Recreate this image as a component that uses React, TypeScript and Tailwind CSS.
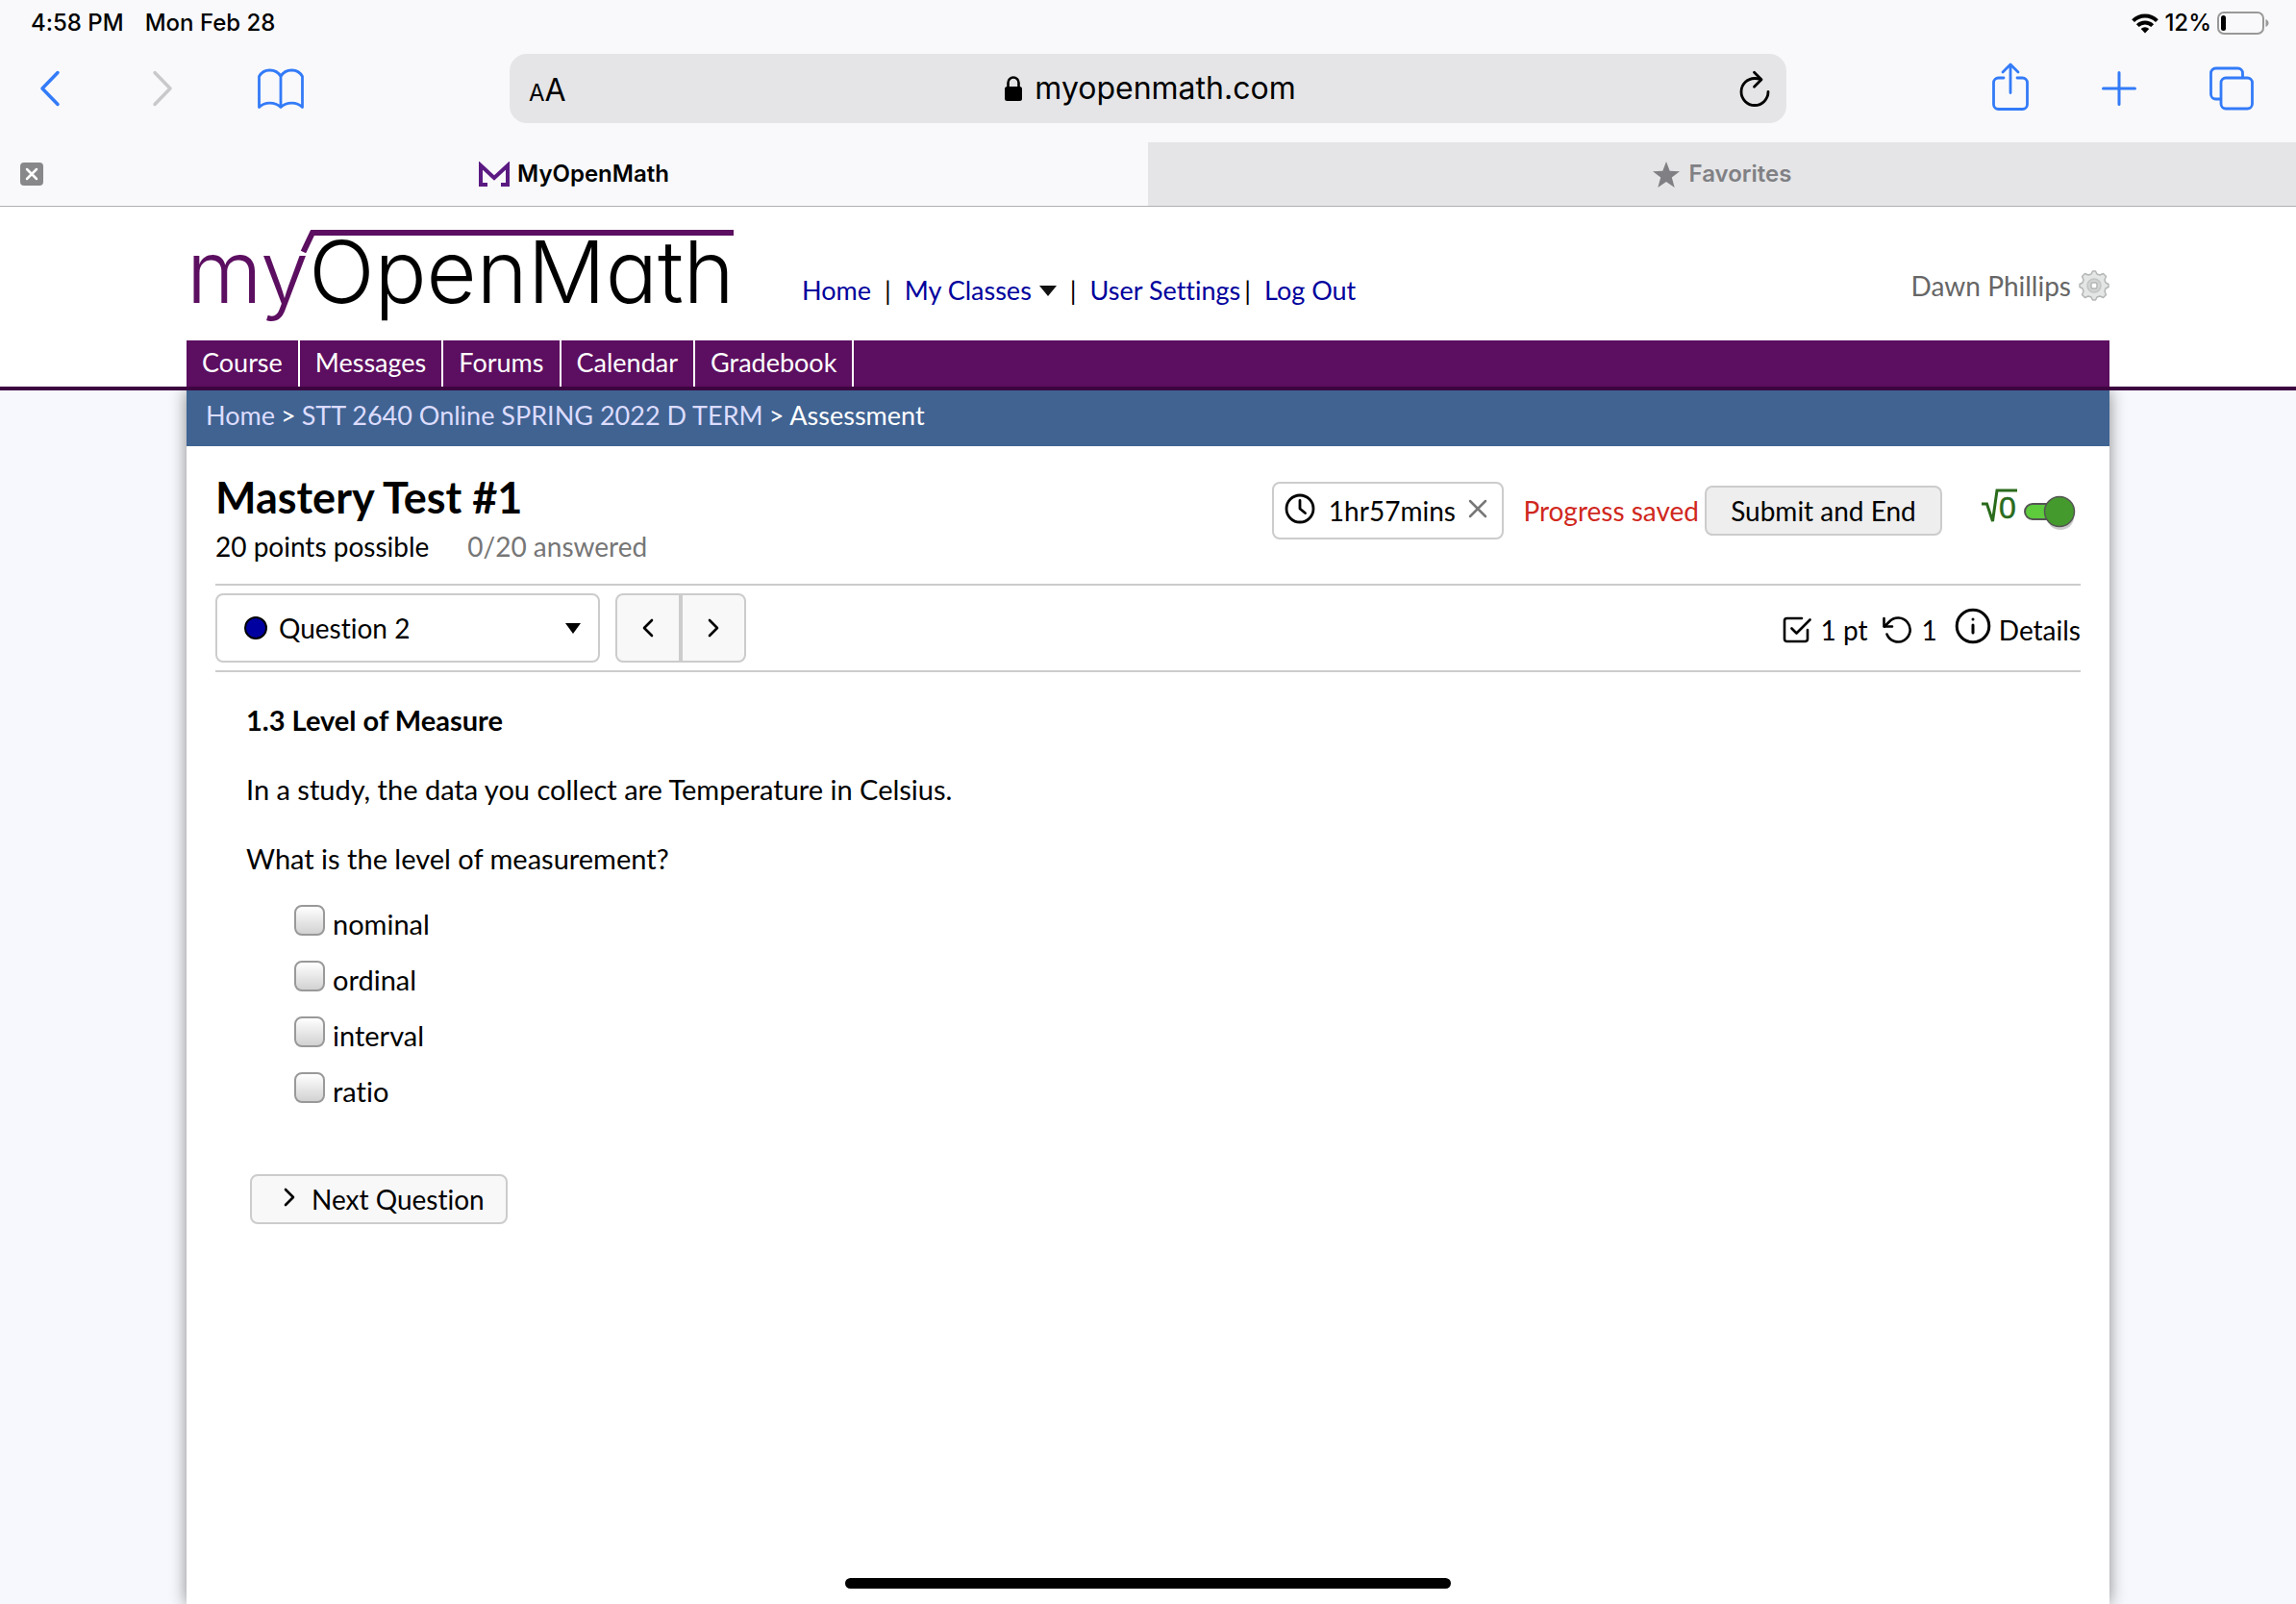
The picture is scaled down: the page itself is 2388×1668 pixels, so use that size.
import { useState } from "react";

const menuItems = ["Course", "Messages", "Forums", "Calendar", "Gradebook"];
const choices = ["nominal", "ordinal", "interval", "ratio"];

const StatusBar = () => (
  <div className="flex h-12 items-center justify-between pl-8 pr-7 text-2xl font-medium">
    <div className="flex gap-[22px]">
      <span>4:58 PM</span>
      <span>Mon Feb 28</span>
    </div>
    <div className="flex items-center gap-1.5">
      <svg width="28" height="21" viewBox="0 0 28 21" fill="none" stroke="#000" strokeWidth="4">
        <path d="M1.6 7.6a17.6 17.6 0 0 1 24.8 0" />
        <path d="M6.3 12.6a11 11 0 0 1 15.4 0" />
        <path d="M14 20.6l-4.3-4.5a6.2 6.2 0 0 1 8.6 0z" fill="#000" stroke="none" />
      </svg>
      <span>12%</span>
      <svg width="54" height="24" viewBox="0 0 54 24" fill="none">
        <rect x="1" y="1" width="47" height="22" rx="6" stroke="#999" strokeWidth="2" />
        <rect x="4" y="4" width="5" height="16" rx="2.5" fill="#000" />
        <path d="M50.500 8v8c2-.8 3-2.300 3-4s-1-3.200-3-4z" fill="#999" />
      </svg>
    </div>
  </div>
);

const Toolbar = () => (
  <div className="flex h-[100px] items-start pt-2">
    <div className="flex h-[72px] w-[530px] shrink-0 items-center pl-10 text-[#337bf8]">
      <button aria-label="Back">
        <svg width="24" height="40" viewBox="0 0 24 40" fill="none" stroke="currentColor" strokeWidth="3.500" strokeLinecap="round" strokeLinejoin="round">
          <path d="M20 3.500L4 20l16 16.500" />
        </svg>
      </button>
      <button aria-label="Forward" className="ml-[93px] text-[#c9c9cb]">
        <svg width="24" height="40" viewBox="0 0 24 40" fill="none" stroke="currentColor" strokeWidth="3.500" strokeLinecap="round" strokeLinejoin="round">
          <path d="M4 3.500L20 20 4 36.500" />
        </svg>
      </button>
      <button aria-label="Bookmarks" className="ml-[87px]">
        <svg width="48" height="42" viewBox="0 0 48 42" fill="none" stroke="currentColor" strokeWidth="2.800" strokeLinejoin="round">
          <path d="M24 8.500C21.500 4 17.500 2 12.500 2S4 4 1.500 8.500v32C4.500 37.500 8 36.200 12.500 36.200S21 37.500 24 40.500c3-3 7-4.300 11.500-4.300s8 1.300 11 4.300v-32C44 4 40.500 2 35.500 2S26.500 4 24 8.500v32" />
        </svg>
      </button>
    </div>

    <div className="flex h-[72px] min-w-0 flex-1 items-center justify-between rounded-[18px] bg-[#e5e5e7] pl-5 pr-4">
      <button aria-label="Text size" className="w-12 pt-1 text-left text-[32px] leading-10">
        <span className="text-2xl">A</span>A
      </button>
      <a href="#" className="flex items-center gap-3 text-[32px] leading-10">
        <svg width="20" height="28" viewBox="0 0 20 28">
          <path d="M4.500 13V8a5.500 5.500 0 0 1 11 0v5" fill="none" stroke="#000" strokeWidth="2.600" />
          <rect x="1" y="12" width="18" height="15" rx="2.500" />
        </svg>
        myopenmath.com
      </a>
      <button aria-label="Reload" className="flex w-12 justify-end">
        <svg width="34" height="38" viewBox="0 0 34 38" fill="none" stroke="#000" strokeWidth="2.800" strokeLinecap="round" strokeLinejoin="round">
          <path d="M31 22.500A14 14 0 1 1 17 8.500c2.500 0 4.500.4 6.500 1.200" />
          <path d="M16.500 2.200l7.500 7.500-7.500 7.500" />
        </svg>
      </button>
    </div>

    <div className="flex h-[72px] w-[530px] shrink-0 items-center justify-end pr-11 text-[#337bf8]">
      <button aria-label="Share" className="pb-1">
        <svg width="38" height="50" viewBox="0 0 38 50" fill="none" stroke="currentColor" strokeWidth="2.800" strokeLinecap="round" strokeLinejoin="round">
          <path d="M12 16H6.500a5 5 0 0 0-5 5v22.500a5 5 0 0 0 5 5h25a5 5 0 0 0 5-5V21a5 5 0 0 0-5-5H26" />
          <path d="M19 31.500V2.500M11 10l8-8 8 8" />
        </svg>
      </button>
      <button aria-label="New tab" className="ml-[76px]">
        <svg width="36" height="36" viewBox="0 0 36 36" fill="none" stroke="currentColor" strokeWidth="3" strokeLinecap="round">
          <path d="M18 1.500v33M1.500 18h33" />
        </svg>
      </button>
      <button aria-label="All tabs" className="ml-[76px]">
        <svg width="46" height="46" viewBox="0 0 46 46" fill="none" stroke="currentColor" strokeWidth="2.800">
          <path d="M12 34H6.500a5 5 0 0 1-5-5V7a5 5 0 0 1 5-5h23a5 5 0 0 1 5 5v5" />
          <rect x="12" y="12" width="32.500" height="32" rx="5" />
        </svg>
      </button>
    </div>
  </div>
);

const TabStrip = () => (
  <div className="flex h-[67px] border-b border-[#b0b0b2] text-2xl font-semibold">
    <div className="flex w-1/2 items-center pl-[21px] pr-[45px]">
      <button aria-label="Close tab">
        <svg width="24" height="24" viewBox="0 0 24 24">
          <rect width="24" height="24" rx="4" fill="#88888b" />
          <path d="M7 7l10 10M17 7L7 17" stroke="#fff" strokeWidth="2.500" strokeLinecap="round" />
        </svg>
      </button>
      <div className="flex flex-1 items-center justify-center gap-2">
        <svg width="32" height="26" viewBox="0 0 32 26" fill="none" stroke="#5b1a82" strokeWidth="4">
          <path d="M9 24H2V4l14 13L30 4v20h-7" />
        </svg>
        MyOpenMath
      </div>
    </div>
    <div className="flex w-1/2 items-center justify-center gap-2.5 bg-[#e5e5e7] text-[#808084]">
      <svg width="28" height="27" viewBox="0 0 28 27" fill="currentColor">
        <path d="M14 0l3.700 9.800L28 10.200l-8.200 6.400L22.700 27 14 21l-8.700 6 2.900-10.400L0 10.200l10.300-.4z" />
      </svg>
      Favorites
    </div>
  </div>
);

const Logo = () => (
  <a href="#" aria-label="myOpenMath" className="flex w-[570px] flex-col pt-6">
    <svg width="570" height="24" viewBox="0 0 570 24" fill="none" className="-mb-6">
      <path d="M121.500 23L131 3h438" stroke="#5c0e60" strokeWidth="6" />
    </svg>
    <span className="whitespace-nowrap font-['Inter',sans-serif] text-[90px] font-light leading-[88px] [font-feature-settings:'cv11']">
      <span className="text-[#5c0e60]">my</span>OpenMath
    </span>
  </a>
);

const Gear = () => (
  <svg width="32" height="32" viewBox="0 0 32 32" fill="#e4e6e6" stroke="#b4b6b6" strokeWidth="1.500" strokeLinejoin="round">
    <path d="M13 4l1.500-3h3L19 4l3 1 3.500-1.500 3 3L27 10l1 3 3 1.500v3L28 19l-1 3 1.500 3.500-3 3L22 27l-3 1-1.500 3h-3L13 28l-3-1-3.500 1.500-3-3L5 22l-1-3-3-1.500v-3L4 13l1-3-1.500-3.500 3-3L10 5z" />
    <circle cx="16" cy="16" r="7" fill="#d2d4d4" stroke="#c2c4c4" />
    <rect x="13" y="13" width="6" height="6" rx="1.500" fill="#fff" />
  </svg>
);

const SiteHeader = () => (
  <header className="relative z-10 border-b-4 border-[#3c0540] bg-white">
    <div className="mx-auto max-w-[2000px]">
      <div className="flex h-[139px] items-start justify-between">
        <div className="flex items-start">
          <Logo />
          <nav className="flex items-center gap-3.5 pt-[67px] pl-[70px] text-[27px] leading-10 text-[#00009c]">
            <a href="#">Home</a>
            <span className="text-black">|</span>
            <a href="#" className="flex items-center gap-2">
              My Classes
              <svg width="18" height="11" viewBox="0 0 18 11">
                <path d="M0 0h18l-9 11z" fill="#111" />
              </svg>
            </a>
            <span className="text-black">|</span>
            <span className="flex gap-1">
              <a href="#">User Settings</a>
              <span className="text-black">|</span>
            </span>
            <a href="#">Log Out</a>
          </nav>
        </div>
        <a href="#" className="flex items-center gap-2 pt-[62px] text-[28px] leading-10 text-[#666]">
          Dawn Phillips
          <Gear />
        </a>
      </div>
      <nav className="flex h-12 bg-[#5c0e60] text-[27px] leading-[46px] text-white">
        {menuItems.map((item) => (
          <a key={item} href="#" className="border-r-2 border-white px-4">
            {item}
          </a>
        ))}
      </nav>
    </div>
  </header>
);

const Chevron = ({ left = false }: { left?: boolean }) => (
  <svg width="14" height="20" viewBox="0 0 14 20" fill="none" stroke="#000" strokeWidth="2.600" strokeLinecap="round" strokeLinejoin="round">
    <path d={left ? "M11 2L3 10l8 8" : "M3 2l8 8-8 8"} />
  </svg>
);

const AssessmentHeader = () => {
  const [mathEntry, setMathEntry] = useState(true);

  return (
    <div className="flex items-start justify-between pt-7 pb-[13px]">
      <div>
        <h1 className="text-[45px] font-bold leading-[50px]">Mastery Test #1</h1>
        <p className="flex gap-10 text-[28px] leading-[52px]">
          <span>20 points possible</span>
          <span className="text-[#767676]">0/20 answered</span>
        </p>
      </div>
      <div className="flex items-center pt-[9px] pr-1 text-[28px]">
        <div className="flex h-[60px] w-[241px] items-center justify-between rounded-lg border-2 border-[#ccc] pl-[11px] pr-[15px]">
          <svg width="32" height="32" viewBox="0 0 32 32" fill="none" stroke="#000" strokeWidth="2.800" strokeLinecap="round" strokeLinejoin="round" className="mb-1">
            <circle cx="16" cy="16" r="14" />
            <path d="M16 7.500V16l5.500 4.500" />
          </svg>
          <span>1hr57mins</span>
          <button aria-label="Hide timer" className="mb-1">
            <svg width="20" height="20" viewBox="0 0 20 20" stroke="#777" strokeWidth="2.500" strokeLinecap="round">
              <path d="M2 2l16 16M18 2L2 18" />
            </svg>
          </button>
        </div>
        <span className="ml-5 text-[#d0281e]">Progress saved</span>
        <button className="ml-1.5 h-[52px] w-[247px] rounded-lg border-2 border-[#ccc] bg-[#eee]">Submit and End</button>
        <button
          role="switch"
          aria-checked={mathEntry}
          aria-label="Math entry"
          onClick={() => setMathEntry(!mathEntry)}
          className="ml-10"
        >
          <svg width="100" height="50" viewBox="0 0 100 50">
            <path d="M1 18h5.500l6 18L17 4h21" fill="none" stroke="#2a6b1c" strokeWidth="3" />
            <text x="19" y="33" fontSize="32" fontFamily="'Liberation Sans Narrow', 'Liberation Sans', sans-serif" fill="#2a6b1c" stroke="#2a6b1c" strokeWidth="0.500">0</text>
            <ellipse cx="83" cy="32" rx="14" ry="13" fill="#000" opacity="0.200" />
            <rect x="46" y="18" width="34" height="16" rx="8" fill="#5dcb3c" stroke="#555" strokeWidth="2" />
            <circle cx="82" cy="26" r="15.500" fill="#449a2c" stroke="#555" strokeWidth="1.500" />
          </svg>
        </button>
      </div>
    </div>
  );
};

const QuestionBar = () => (
  <div className="flex items-center justify-between border-y-2 border-[#ccc] py-2 text-[28px]">
    <div className="flex gap-4">
      <label className="flex h-[72px] w-[400px] items-center rounded-lg border-2 border-[#ccc] pl-7 pr-[18px]">
        <span className="h-6 w-6 rounded-full border-2 border-black bg-[#0000a0]" />
        <select aria-label="Question" className="h-full flex-1 appearance-none pl-3 outline-none">
          <option>Question 2</option>
        </select>
        <svg width="16" height="11" viewBox="0 0 16 11" className="pointer-events-none">
          <path d="M0 0h16L8 11z" />
        </svg>
      </label>
      <div className="flex">
        <button aria-label="Previous question" className="flex h-[72px] w-[68px] items-center justify-center rounded-l-lg border-2 border-[#ccc] bg-[#f8f8f8]">
          <Chevron left />
        </button>
        <button aria-label="Next question" className="flex h-[72px] w-[68px] items-center justify-center rounded-r-lg border-2 border-[#ccc] bg-[#f8f8f8]">
          <Chevron />
        </button>
      </div>
    </div>
    <div className="flex items-center gap-2.5 pt-1">
      <svg width="30" height="28" viewBox="0 0 30 28" fill="none" stroke="#000" strokeWidth="2.600" strokeLinecap="round" strokeLinejoin="round">
        <path d="M20 2H4.500A2.500 2.500 0 0 0 2 4.500v19A2.500 2.500 0 0 0 4.500 26h19a2.500 2.500 0 0 0 2.500-2.500V14" />
        <path d="M9.500 12.500l5 5L28.500 3.500" />
      </svg>
      <span>1 pt</span>
      <svg width="32" height="30" viewBox="0 0 32 30" fill="none" stroke="#000" strokeWidth="2.600" strokeLinecap="round" strokeLinejoin="round" className="ml-1">
        <path d="M2.500 3v8.500H11" />
        <path d="M5.500 19.500A12.500 12.500 0 1 0 8 6.500l-5 5" />
      </svg>
      <span>1</span>
      <button className="ml-2 flex items-center gap-2">
        <svg width="38" height="38" viewBox="0 0 38 38" fill="none" stroke="#000" strokeWidth="3" strokeLinecap="round" className="mb-2">
          <circle cx="19" cy="19" r="16.800" />
          <path d="M19 18v8M19 12v.1" />
        </svg>
        Details
      </button>
    </div>
  </div>
);

const Question = () => (
  <div className="px-8 pt-8 text-[29px] leading-9">
    <h2 className="font-bold">1.3 Level of Measure</h2>
    <p className="mt-9">In a study, the data you collect are Temperature in Celsius.</p>
    <p className="mt-9">What is the level of measurement?</p>
    <ul className="mt-6 flex flex-col gap-4 pl-[50px]">
      {choices.map((choice) => (
        <li key={choice}>
          <label className="flex h-[42px] items-start gap-2">
            <input
              type="checkbox"
              className="mt-1.5 h-8 w-8 appearance-none rounded-lg border-2 border-[#999] bg-gradient-to-b from-white to-[#d2d2d2]"
            />
            <span className="pt-2">{choice}</span>
          </label>
        </li>
      ))}
    </ul>
    <button className="mt-[70px] ml-1 flex h-[52px] w-[268px] items-center gap-4 rounded-lg border-2 border-[#ccc] bg-[#f8f8f8] pl-8 text-[28px]">
      <span className="pb-1">
        <Chevron />
      </span>
      Next Question
    </button>
  </div>
);

export default function App() {
  return (
    <div className="flex min-h-screen flex-col bg-[#f9f9fb] font-['Inter',sans-serif] text-black [font-variant-ligatures:none]">
      <StatusBar />
      <Toolbar />
      <TabStrip />
      <div className="flex flex-1 flex-col bg-[#f7f8fd] font-['Lato',sans-serif]">
        <SiteHeader />
        <main className="mx-auto w-full max-w-[2000px] flex-1 bg-white shadow-[0_0_16px_#888]">
          <nav className="flex h-[58px] gap-1.5 bg-[#406392] px-5 text-[27px] leading-[52px] text-white">
            <a href="#" className="text-[#dcdcff]">Home</a>
            <span>&gt;</span>
            <a href="#" className="text-[#dcdcff]">STT 2640 Online SPRING 2022 D TERM</a>
            <span>&gt;</span>
            <span>Assessment</span>
          </nav>
          <div className="px-[30px]">
            <AssessmentHeader />
            <QuestionBar />
            <Question />
          </div>
        </main>
      </div>
      <div className="fixed bottom-4 left-1/2 z-20 h-[11px] w-[630px] -translate-x-1/2 rounded-full bg-black" />
    </div>
  );
}
